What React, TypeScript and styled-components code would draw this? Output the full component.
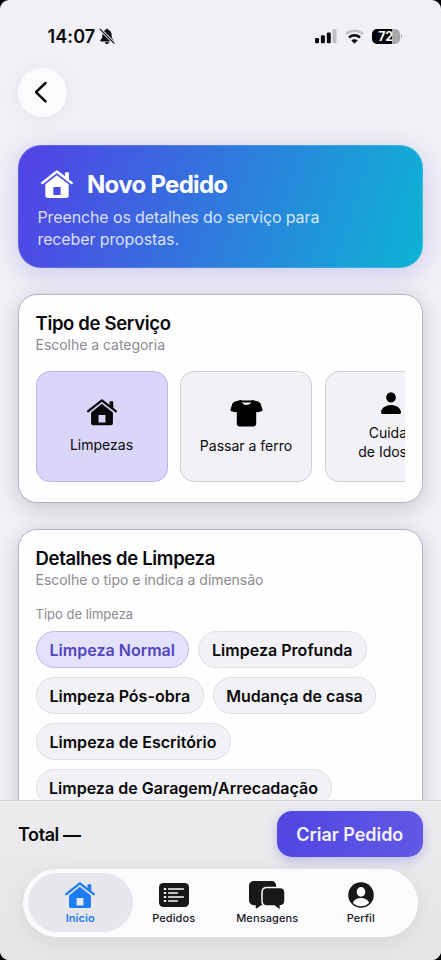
import React from "react";
import styled, { createGlobalStyle, css } from "styled-components";

const GlobalStyle = createGlobalStyle`
  * { box-sizing: border-box; }
  body { margin: 0; background: #000; font-family: Inter, "Liberation Sans", sans-serif; }
  button { font: inherit; border: 0; margin: 0; padding: 0; background: none; color: inherit; }
  svg { display: block; flex: none; }
`;

const Screen = styled.div`
  width: 441px;
  height: 960px;
  display: flex;
  flex-direction: column;
  overflow: hidden;
  border-radius: 9px;
  background: #f1f0f5;
  color: #09090b;
`;

const Content = styled.main`
  flex: 1;
  min-height: 0;
  overflow: hidden;
  padding: 0 18px;
`;

const StatusBar = styled.header`
  height: 68px;
  display: flex;
  align-items: flex-start;
  justify-content: space-between;
  padding: 25.5px 21px 0 29.5px;
`;

const StatusGroup = styled.div<{ $gap: number }>`
  height: 22px;
  display: flex;
  align-items: center;
  gap: ${(p) => p.$gap}px;
`;

const Clock = styled.span`
  font-size: 18px;
  font-weight: 600;
  line-height: 22px;
  letter-spacing: 0.1px;
`;

const Battery = styled.div`
  width: 28px;
  height: 15.5px;
  border-radius: 5px;
  background: linear-gradient(90deg, #050507 72%, #a9a9ad 72%);
  color: #fff;
  font-size: 12.5px;
  font-weight: 700;
  line-height: 15.5px;
  text-align: center;
  letter-spacing: -0.4px;
`;

const BatteryTip = styled.div`
  width: 1.5px;
  height: 5px;
  margin-left: 1px;
  border-radius: 0 2px 2px 0;
  background: #b4b4b8;
`;

const BatteryRow = styled.div`
  display: flex;
  align-items: center;
`;

const BackButton = styled.button`
  display: flex;
  align-items: center;
  justify-content: center;
  width: 48.5px;
  height: 48.5px;
  border-radius: 50%;
  background: #fbfbfe;
  box-shadow: 0 2px 22px rgba(0, 0, 0, 0.055);
`;

const Hero = styled.section`
  height: 123px;
  margin-top: 28.5px;
  padding: 22px 19px 0;
  border-radius: 23px;
  border: 1px solid rgba(255, 255, 255, 0.14);
  background: linear-gradient(107deg, #4f46e5 5%, #0cb4d4 100%) border-box;
  box-shadow: 0 9px 26px rgba(79, 70, 229, 0.17), 0 -2px 26px rgba(79, 100, 229, 0.07);
  color: #fff;
`;

const HeroHead = styled.div`
  display: flex;
  align-items: center;
  gap: 14px;
  height: 32px;
  padding-left: 3px;
`;

const HeroTitle = styled.h1`
  margin: 0;
  padding-top: 1px;
  font-size: 24px;
  line-height: 32px;
  font-weight: 700;
  letter-spacing: -0.7px;
`;

const HeroText = styled.p`
  margin: 5.5px 0 0 -0.5px;
  font-size: 16px;
  line-height: 22px;
  letter-spacing: -0.12px;
  color: rgba(255, 255, 255, 0.82);
`;

const Card = styled.section<{ $height: number; $gap: number }>`
  height: ${(p) => p.$height}px;
  margin-top: ${(p) => p.$gap}px;
  padding: 17px 17px 17px 16.5px;
  border-radius: 19px;
  border: 1px solid #b4b2c6;
  background: #fefeff;
  box-shadow: 0 8px 22px rgba(20, 20, 45, 0.13), 0 0 20px rgba(20, 20, 45, 0.06);
`;

const CardTitle = styled.h2`
  margin: 0;
  font-size: 18.5px;
  line-height: 23px;
  font-weight: 600;
  letter-spacing: -0.33px;
`;

const CardSubtitle = styled.p`
  margin: 0;
  font-size: 14px;
  line-height: 20px;
  letter-spacing: -0.03px;
  color: #8b8b90;
`;

const TileRow = styled.div`
  display: flex;
  gap: 12.5px;
  margin-top: 16px;
  overflow: hidden;
`;

const Tile = styled.button<{ $active?: boolean }>`
  flex: none;
  width: 132px;
  height: 110.5px;
  display: flex;
  flex-direction: column;
  align-items: center;
  justify-content: center;
  gap: 9px;
  padding-top: 1px;
  border-radius: 14px;
  border: 1px solid ${(p) => (p.$active ? "#b9b3e6" : "#d0d0d6")};
  background: ${(p) => (p.$active ? "#d9d6f9" : "#f2f1f6")};
  font-size: 14px;
  line-height: 19.5px;
`;

const FieldLabel = styled.div`
  margin-top: 15px;
  font-size: 13px;
  line-height: 18px;
  color: #8b8b90;
`;

const Chips = styled.div`
  display: flex;
  flex-wrap: wrap;
  gap: 9px;
  margin-top: 8px;
`;

const Chip = styled.button<{ $width: number; $active?: boolean }>`
  width: ${(p) => p.$width}px;
  height: 37px;
  border-radius: 19px;
  border: 1px solid #dedee3;
  background: #f2f1f6;
  font-size: 16px;
  font-weight: 600;
  letter-spacing: 0.02px;
  white-space: nowrap;
  ${(p) =>
    p.$active &&
    css`
      border-color: #bdb8e6;
      background: #e4e1fb;
      color: #5145c0;
    `}
`;

const BottomPanel = styled.footer`
  flex: none;
  height: 160px;
  padding: 10px 18px 0;
  border-top: 1px solid #d5d5d9;
  background: linear-gradient(#ececee, #e5e5e8);
  display: flex;
  flex-direction: column;
`;

const TotalRow = styled.div`
  display: flex;
  align-items: center;
  justify-content: space-between;
`;

const Total = styled.span`
  font-size: 18px;
  font-weight: 600;
  letter-spacing: -0.4px;
`;

const CreateButton = styled.button`
  width: 146.5px;
  height: 46px;
  border-radius: 15px;
  background: linear-gradient(100deg, #5046e2, #6258e5);
  box-shadow: 0 4px 12px rgba(79, 70, 229, 0.28);
  color: #f5f3ff;
  font-size: 18px;
  font-weight: 600;
  letter-spacing: -0.05px;
`;

const TabBar = styled.nav`
  height: 68px;
  margin: 11.5px 5px 0;
  padding: 4.5px 4.5px;
  display: flex;
  justify-content: space-between;
  border-radius: 34px;
  background: #fbfbfe;
  box-shadow: 0 4px 22px rgba(0, 0, 0, 0.07);
`;

const Tab = styled.button<{ $active?: boolean }>`
  width: 105.5px;
  margin-right: -12px;
  display: flex;
  flex-direction: column;
  align-items: center;
  padding-top: 6px;
  border-radius: 30px;
  font-size: 11px;
  line-height: 15px;
  font-weight: ${(p) => (p.$active ? 600 : 500)};
  letter-spacing: 0.1px;
  color: ${(p) => (p.$active ? "#1c7cf2" : "#18181b")};
  background: ${(p) => (p.$active ? "#e7e7eb" : "transparent")};
  &:last-child { margin-right: 0; }
`;

const TabIcon = styled.span`
  height: 32px;
  display: flex;
  align-items: center;
`;

function House({ width }: { width: number }) {
  return (
    <svg width={width} height={width * 0.885} viewBox="0 0 96 85" fill="currentColor">
      <path d="M4 39 47.5 4.5 92 39" fill="none" stroke="currentColor" strokeWidth="7.5" strokeLinecap="round" strokeLinejoin="round" />
      <path d="M72 19V10q0-3 3-3h6q3 0 3 3v22z" />
      <path fillRule="evenodd" d="M13 43 47.5 15.5 83 43v34q0 7-7 7H20q-7 0-7-7zM37 51v24h22V51z" />
    </svg>
  );
}

function BellOff() {
  return (
    <svg width="16" height="17" viewBox="0 0 16 17">
      <path d="M8 .7c.9 0 1.4.6 1.5 1.3 2 .7 3.1 2.4 3.1 4.7 0 3 .7 4 1.8 5 .7.7.4 1.7-.7 1.7H2.3c-1.1 0-1.4-1-.7-1.7 1.1-1 1.8-2 1.8-5C3.4 4.4 4.5 2.7 6.5 2 6.6 1.3 7.1.7 8 .7zM5.8 14.2h4.4c-.3 1.1-1.100 1.8-2.200 1.8s-1.900-.7-2.200-1.800z" fill="#09090b" />
      <path d="m1.2 1.200 14 14" stroke="#f1f0f5" strokeWidth="3" />
      <path d="m1 1.200 14 14" stroke="#09090b" strokeWidth="1.200" strokeLinecap="round" />
    </svg>
  );
}

function Signal() {
  return (
    <svg width="22" height="15" viewBox="0 0 22 15" fill="#09090b">
      <rect x="0" y="9" width="4" height="5.200" rx="1.200" />
      <rect x="5.900" y="6.300" width="4" height="7.900" rx="1.200" />
      <rect x="11.800" y="3.500" width="4" height="10.700" rx="1.200" />
      <rect x="17.500" y=".3" width="4" height="13.900" rx="1.200" fill="#c1c1c5" />
    </svg>
  );
}

function Wifi() {
  return (
    <svg width="19" height="15" viewBox="0 0 19 15" fill="none" strokeWidth="2.500">
      <path d="M1 5.100c4.800-4.500 12.200-4.500 17 0" stroke="#c1c1c5" />
      <path d="M4 8.500c3.200-2.900 7.800-2.900 11 0" stroke="#09090b" />
      <path d="M6.700 11.500c1.600-1.300 4-1.300 5.600 0l-2.800 2.800z" fill="#09090b" stroke="#09090b" strokeWidth=".6" />
    </svg>
  );
}

function Shirt() {
  return (
    <svg width="33" height="28" viewBox="0 0 33 28" fill="#000">
      <path d="M10.500 1 5.800 2.300C3.700 2.900 2.500 4 2 5.700L.5 10.600c-.2.8.1 1.500.9 1.700l3.800 1c.8.200 1.600-.2 1.600-1.100V24.500c0 1.900 1 2.900 2.900 2.900h13.600c1.900 0 2.900-1 2.900-2.900V12.200c0 .9.800 1.300 1.600 1.100l3.800-1c.8-.2 1.100-.9.900-1.700L31 5.700c-.5-1.700-1.700-2.800-3.800-3.400L22.500 1c-1 .4-3.400.6-6 .6s-5-.2-6-.6z" />
      <path d="M12 2.900c2 .9 7 .9 9 0-.5 1.900-2.200 3-4.500 3s-4-1.100-4.500-3z" fill="#f2f1f6" />
    </svg>
  );
}

function Person() {
  return (
    <svg width="20" height="22" viewBox="0 0 20 22" fill="#000">
      <ellipse cx="10" cy="5.400" rx="4.800" ry="5.200" />
      <path d="M1.800 22C.6 22 0 21.400 0 20.200 0 16.800 4 13 10 13s10 3.800 10 7.200c0 1.200-.6 1.800-1.800 1.800z" />
    </svg>
  );
}

function ListIcon() {
  return (
    <svg width="30" height="24" viewBox="0 0 30 24">
      <rect width="30" height="24" rx="4.200" fill="#18181b" />
      <path d="M9.500 6H24.500M9.500 10h9M9.500 14h15M9.500 18h9" stroke="#fbfbfe" strokeWidth="1.300" strokeLinecap="round" />
      <path d="M5.600 6h.8M5.600 10h.8M5.600 14h.8M5.600 18h.8" stroke="#fbfbfe" strokeWidth="1.900" strokeLinecap="round" />
    </svg>
  );
}

function Chats() {
  return (
    <svg width="36" height="29" viewBox="0 0 36 29" fill="#18181b">
      <path d="M5.500 0h16.300c3.600 0 5.500 1.900 5.500 5.500v13.200c0 3.600-1.900 5.500-5.500 5.500H12l-4 3c-.7.500-1.300.1-1.300-.7v-2.300C1.900 24.200 0 22.300 0 18.700V5.500C0 1.900 1.900 0 5.500 0z" />
      <path d="M18 6.500h13c3.300 0 5 1.700 5 5v8.300c0 3.100-1.700 4.900-4.600 5v3c0 .9-.8 1.200-1.500.7L25.400 25H18c-3.300 0-5-1.700-5-5v-8.500c0-3.300 1.700-5 5-5z" stroke="#fbfbfe" strokeWidth="1.500" />
    </svg>
  );
}

function Profile() {
  return (
    <svg width="26" height="26" viewBox="0 0 26 26">
      <circle cx="13" cy="13" r="12.800" fill="#18181b" />
      <ellipse cx="13" cy="9.900" rx="4.300" ry="4.800" fill="#fbfbfe" />
      <path d="M4.800 20.700c1.200-2.900 4.500-4.600 8.200-4.600s7 1.700 8.200 4.600c-4.200 4.700-12.200 4.700-16.400 0z" fill="#fbfbfe" />
    </svg>
  );
}

const chips = [
  { label: "Limpeza Normal", width: 153.5, active: true },
  { label: "Limpeza Profunda", width: 168.5 },
  { label: "Limpeza Pós-obra", width: 168.5 },
  { label: "Mudança de casa", width: 163 },
  { label: "Limpeza de Escritório", width: 195 },
  { label: "Limpeza de Garagem/Arrecadação", width: 296 },
];

export default function App() {
  return (
    <>
      <GlobalStyle />
      <Screen>
        <Content>
          <StatusBar>
            <StatusGroup $gap={4}>
              <Clock>14:07</Clock>
              <BellOff />
            </StatusGroup>
            <StatusGroup $gap={8}>
              <Signal />
              <Wifi />
              <BatteryRow>
                <Battery>72</Battery>
                <BatteryTip />
              </BatteryRow>
            </StatusGroup>
          </StatusBar>
          <BackButton aria-label="Voltar">
            <svg width="14" height="22" viewBox="0 0 14 22" fill="none" stroke="#09090b" strokeWidth="2.500" strokeLinecap="round" strokeLinejoin="round">
              <path d="M10.500 2 1 11.200l9.500 9.200" />
            </svg>
          </BackButton>
          <Hero>
            <HeroHead>
              <House width={32} />
              <HeroTitle>Novo Pedido</HeroTitle>
            </HeroHead>
            <HeroText>
              Preenche os detalhes do serviço para
              <br />
              receber propostas.
            </HeroText>
          </Hero>
          <Card $height={209} $gap={26}>
            <CardTitle>Tipo de Serviço</CardTitle>
            <CardSubtitle>Escolhe a categoria</CardSubtitle>
            <TileRow>
              <Tile $active>
                <House width={30} />
                Limpezas
              </Tile>
              <Tile>
                <Shirt />
                Passar a ferro
              </Tile>
              <Tile>
                <Person />
                <span>
                  Cuidar
                  <br />
                  de Idosos
                </span>
              </Tile>
            </TileRow>
          </Card>
          <Card $height={330} $gap={26}>
            <CardTitle>Detalhes de Limpeza</CardTitle>
            <CardSubtitle>Escolhe o tipo e indica a dimensão</CardSubtitle>
            <FieldLabel>Tipo de limpeza</FieldLabel>
            <Chips>
              {chips.map((c) => (
                <Chip key={c.label} $width={c.width} $active={c.active}>
                  {c.label}
                </Chip>
              ))}
            </Chips>
          </Card>
        </Content>
        <BottomPanel>
          <TotalRow>
            <Total>Total —</Total>
            <CreateButton>Criar Pedido</CreateButton>
          </TotalRow>
          <TabBar>
            <Tab $active>
              <TabIcon><House width={30} /></TabIcon>
              Início
            </Tab>
            <Tab>
              <TabIcon><ListIcon /></TabIcon>
              Pedidos
            </Tab>
            <Tab>
              <TabIcon><Chats /></TabIcon>
              Mensagens
            </Tab>
            <Tab>
              <TabIcon><Profile /></TabIcon>
              Perfil
            </Tab>
          </TabBar>
        </BottomPanel>
      </Screen>
    </>
  );
}
